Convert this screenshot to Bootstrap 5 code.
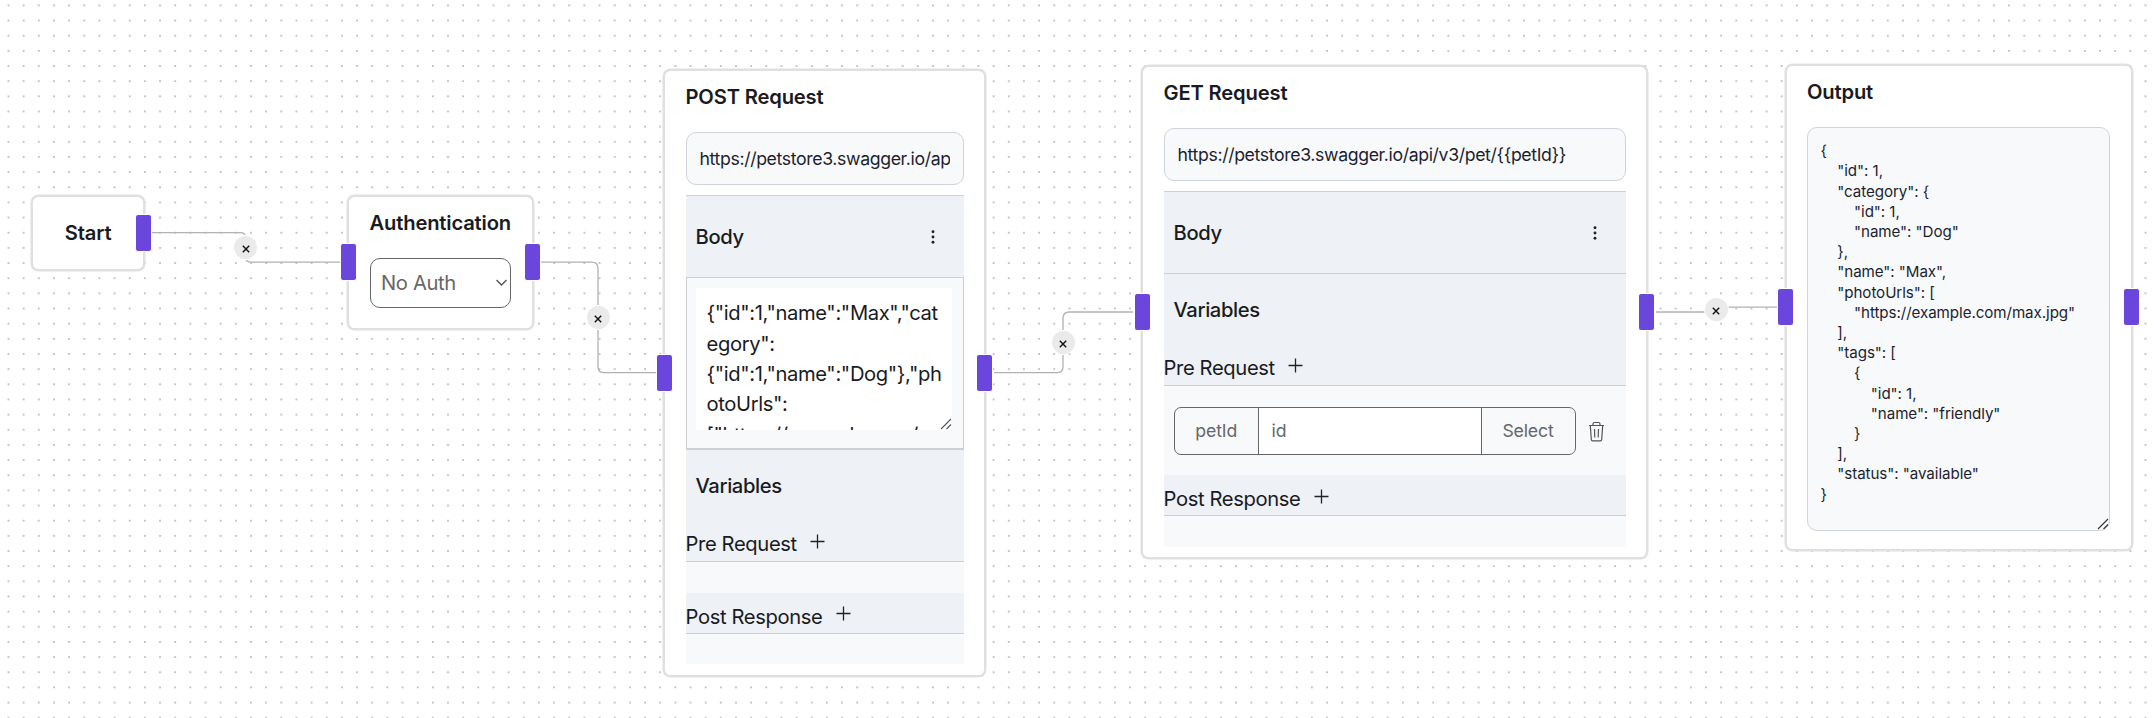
<!DOCTYPE html>
<html lang="en">
<head>
<meta charset="utf-8">
<meta name="viewport" content="width=device-width, initial-scale=1">
<title>API flow</title>
<link href="https://cdn.jsdelivr.net/npm/bootstrap@5.3.0/dist/css/bootstrap.min.css" rel="stylesheet">
<style>
  body { font-family: Inter, "Liberation Sans", sans-serif; font-size: 20.2px; line-height: 30.3px; letter-spacing: -.37px; color: #1a1b1e; }
  .flow-canvas { height: 718px; background: #fff radial-gradient(circle, #a4a4a4 0, #a4a4a4 .5px, transparent 1px) .9px -2.2px / 15.158px 15.158px; }
  .edges { left: 0; top: 0; }
  .edges path { fill: none; stroke: #b1b1b7; stroke-width: 1.3; }
  .node { position: absolute; background: #fff; border: 2px solid #e0e0e0; border-radius: 7.5px; padding: 0 20.5px; box-shadow: 0 0 0 .5px #e0e0e0; }
  .node-title { font-size: 20.2px; font-weight: 600; line-height: 30px; letter-spacing: -.17px; margin: 0; white-space: nowrap; }
  #start { left: 31.3px; top: 194.7px; width: 113.7px; height: 76px; }
  #auth { left: 347px; top: 194.7px; width: 186.5px; height: 135.5px; padding-top: 11px; }
  #post { left: 663px; top: 68.7px; width: 323px; height: 608px; padding-top: 11px; }
  #get { left: 1141px; top: 64.7px; width: 507px; height: 494.8px; padding-top: 11px; }
  #output { left: 1784.5px; top: 63.7px; width: 348.3px; height: 487px; padding-top: 11px; }
  .port { position: absolute; top: 50%; width: 17px; height: 38px; margin-top: -19px; background: #6b46dc; border: 1.3px solid #fff; border-radius: 3px; z-index: 2; }
  .port-in { left: -9.5px; }
  .port-out { right: -9px; }
  .edge-btn { position: absolute; width: 23px; height: 23px; margin: -11.5px 0 0 -11.5px; padding: 2.5px 0 0; border: 0; border-radius: 50%; background: #eaeaea; box-shadow: 0 0 0 1px #fff; display: flex; align-items: center; justify-content: center; }
  .auth-select { height: 49.5px; margin-top: 20.5px; padding: 0 1.5px 0 10.5px; border: 1.3px solid #666; border-radius: 10px; color: #666; }
  .url-field { height: 53.5px; margin: 20.3px 0 9.7px; padding: 0 13px; border: 1.3px solid #cfd3da; border-radius: 10px; background: #f8f9fb; color: #1c1f2e; font-size: 17.7px; letter-spacing: -.37px; box-shadow: none; }
  .section-head { background: #eef1f6; border-top: 1.3px solid #cdcfd2; padding: 0 10px; height: 82px; font-weight: 500; }
  .vars-head { height: 75px; padding-bottom: 2px; }
  .post-vars { border-top: 0; height: 74.3px; padding-bottom: 1px; }
  .dots-icon { margin-right: 12px; }
  .body-panel { height: 172.8px; padding: 9.5px 9.5px 0; border: 1.3px solid #cdcfd2; border-bottom-width: 2.6px; background: #f8f9fb; }
  .body-text { display: block; width: 256px; height: 142.5px; padding: 10.5px; border: 0; background: #fff; color: #1a1b1e; font-size: 20.2px; line-height: 30.4px; letter-spacing: -.37px; resize: none; overflow: hidden; white-space: pre; }
  .grip { position: absolute; }
  .sub-head { background: #eef1f6; border-bottom: 1.3px solid #cdcfd2; height: 41px; padding-top: 9px; gap: 13.5px; white-space: nowrap; }
  .sub-head svg { margin-top: 4.5px; }
  .pre-head { height: 38px; padding-top: 5px; }
  .sub-panel { background: #f8f9fb; height: 30.5px; }
  .var-panel { height: 89px; padding: 20.5px 10.5px 0; }
  .var-group { width: 401.5px; height: 48.5px; flex: none; border: 1.3px solid #666; border-radius: 7px; overflow: hidden; font-size: 17.7px; letter-spacing: -.15px; color: #666; }
  .var-key { width: 83.5px; border-right: 1.3px solid #666; }
  .var-value { background: #fff; padding-left: 13px; }
  .var-select { width: 94px; border-left: 1.3px solid #666; }
  .output-text { display: block; width: 303px; height: 404.5px; margin-top: 20px; padding: 13.5px 12.5px; border: 1.3px solid #cfd3da; border-radius: 10px; background: #f8f9fb; color: #1c1f2e; font-size: 15.16px; line-height: 20.2px; letter-spacing: -.07px; resize: none; overflow: hidden; white-space: pre; }
</style>
</head>
<body>
<main class="flow-canvas position-relative overflow-hidden">
  <svg class="edges position-absolute" width="2156" height="718">
    <path d="M152 232.6H240.500Q245.700 232.600 245.700 237.800V257Q245.700 262.200 251 262.200H340"/>
    <path d="M541 262.200H591.700Q598 262.200 598 268.500V366.400Q598 372.700 604.300 372.700H656"/>
    <path d="M994 372.700H1056.700Q1063 372.700 1063 366.400V318.300Q1063 312 1069.300 312H1133"/>
    <path d="M1656 312H1714Q1716.500 312 1716.500 309.500Q1716.500 307.200 1719 307.200H1778"/>
  </svg>

  <button class="edge-btn" style="left:245.7px;top:247.4px" aria-label="Remove"><svg width="8" height="8" viewBox="0 0 8 8"><path d="M.8 .8l6.400 6.400M7.200 .8L.8 7.200" stroke="#111" stroke-width="1.4"/></svg></button>
  <button class="edge-btn" style="left:598px;top:317.4px" aria-label="Remove"><svg width="8" height="8" viewBox="0 0 8 8"><path d="M.8 .8l6.400 6.400M7.200 .8L.8 7.200" stroke="#111" stroke-width="1.4"/></svg></button>
  <button class="edge-btn" style="left:1063px;top:342.4px" aria-label="Remove"><svg width="8" height="8" viewBox="0 0 8 8"><path d="M.8 .8l6.400 6.400M7.200 .8L.8 7.200" stroke="#111" stroke-width="1.4"/></svg></button>
  <button class="edge-btn" style="left:1716.300px;top:309.800px" aria-label="Remove"><svg width="8" height="8" viewBox="0 0 8 8"><path d="M.8 .8l6.400 6.400M7.200 .8L.8 7.200" stroke="#111" stroke-width="1.4"/></svg></button>

  <section class="node d-flex align-items-center justify-content-center" id="start">
    <h2 class="node-title">Start</h2>
    <span class="port port-out"></span>
  </section>

  <section class="node" id="auth">
    <h2 class="node-title">Authentication</h2>
    <div class="auth-select d-flex align-items-center justify-content-between">
      <span>No Auth</span>
      <svg width="15" height="15" viewBox="0 0 15 15" fill="none" stroke="#555" stroke-width="1.4"><path d="M2.500 5l5 5 5-5"/></svg>
    </div>
    <span class="port port-in"></span><span class="port port-out"></span>
  </section>

  <section class="node" id="post">
    <h2 class="node-title">POST Request</h2>
    <input class="form-control url-field" value="https://petstore3.swagger.io/api/v3/pet">
    <div class="section-head d-flex align-items-center justify-content-between">
      <span>Body</span>
      <svg class="dots-icon" width="18" height="18" viewBox="0 0 18 18" fill="#222"><circle cx="9" cy="3.800" r="1.450"/><circle cx="9" cy="9" r="1.450"/><circle cx="9" cy="14.200" r="1.450"/></svg>
    </div>
    <div class="body-panel position-relative">
      <textarea class="body-text" spellcheck="false">{"id":1,"name":"Max","cat
egory":
{"id":1,"name":"Dog"},"ph
otoUrls":
["https://example.com/m</textarea>
      <svg class="grip" style="right:10.5px;bottom:18px" width="12" height="12" viewBox="0 0 12 12" stroke="#555" stroke-width="1.1"><path d="M1 11L11 1M6.500 11L11 6.500"/></svg>
    </div>
    <div class="section-head post-vars d-flex align-items-center">Variables</div>
    <div class="sub-head pre-head d-flex">Pre Request <svg width="15" height="15" viewBox="0 0 15 15" stroke="#222" stroke-width="1.300"><path d="M7.500 .5v14M.5 7.500h14"/></svg></div>
    <div class="sub-panel"></div>
    <div class="sub-head d-flex">Post Response <svg width="15" height="15" viewBox="0 0 15 15" stroke="#222" stroke-width="1.300"><path d="M7.500 .5v14M.5 7.500h14"/></svg></div>
    <div class="sub-panel"></div>
    <span class="port port-in"></span><span class="port port-out"></span>
  </section>

  <section class="node" id="get">
    <h2 class="node-title">GET Request</h2>
    <input class="form-control url-field" value="https://petstore3.swagger.io/api/v3/pet/{{petId}}">
    <div class="section-head d-flex align-items-center justify-content-between">
      <span>Body</span>
      <svg class="dots-icon" width="18" height="18" viewBox="0 0 18 18" fill="#222"><circle cx="9" cy="3.800" r="1.450"/><circle cx="9" cy="9" r="1.450"/><circle cx="9" cy="14.200" r="1.450"/></svg>
    </div>
    <div class="section-head vars-head d-flex align-items-center">Variables</div>
    <div class="sub-head pre-head d-flex">Pre Request <svg width="15" height="15" viewBox="0 0 15 15" stroke="#222" stroke-width="1.300"><path d="M7.500 .5v14M.5 7.500h14"/></svg></div>
    <div class="sub-panel var-panel d-flex">
      <div class="var-group d-flex">
        <div class="var-key d-flex align-items-center justify-content-center">petId</div>
        <div class="var-value flex-grow-1 d-flex align-items-center">id</div>
        <div class="var-select d-flex align-items-center justify-content-center">Select</div>
      </div>
      <svg style="margin:14px 0 0 12px" width="17" height="21" viewBox="0 0 17 21" fill="none" stroke="#555" stroke-width="1.200"><path d="M1 4.500h15M2.300 4.500l1 14q.1 1.300 1.400 1.300h7.600q1.300 0 1.400-1.300l1-14M5 4.500V3q0-1.500 1.500-1.500h4Q12 1.500 12 3v1.500M6.500 8l.3 8.500M10.500 8l-.3 8.500"/></svg>
    </div>
    <div class="sub-head d-flex">Post Response <svg width="15" height="15" viewBox="0 0 15 15" stroke="#222" stroke-width="1.300"><path d="M7.500 .5v14M.5 7.500h14"/></svg></div>
    <div class="sub-panel"></div>
    <span class="port port-in"></span><span class="port port-out"></span>
  </section>

  <section class="node" id="output">
    <h2 class="node-title">Output</h2>
    <div class="position-relative">
      <textarea class="output-text" spellcheck="false">{
    "id": 1,
    "category": {
        "id": 1,
        "name": "Dog"
    },
    "name": "Max",
    "photoUrls": [
        "https://example.com/max.jpg"
    ],
    "tags": [
        {
            "id": 1,
            "name": "friendly"
        }
    ],
    "status": "available"
}</textarea>
      <svg class="grip" style="right:1.500px;bottom:1px" width="12" height="12" viewBox="0 0 12 12" stroke="#333" stroke-width="1.1"><path d="M1 11L11 1M6.500 11L11 6.500"/></svg>
    </div>
    <span class="port port-in"></span><span class="port port-out"></span>
  </section>
</main>
<script src="https://cdn.jsdelivr.net/npm/bootstrap@5.3.0/dist/js/bootstrap.bundle.min.js"></script>
</body>
</html>
